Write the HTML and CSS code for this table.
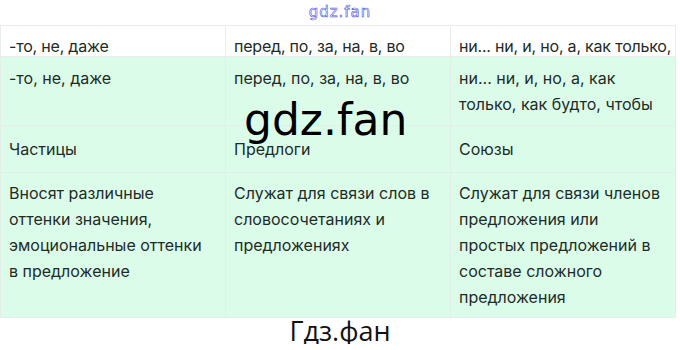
FILE: index.html
```html
<!DOCTYPE html>
<html lang="ru">
<head>
    <meta charset="UTF-8">
    <meta name="viewport" content="width=device-width, initial-scale=1.0">
    <title>Части речи</title>
    <link rel="stylesheet" href="styles.css">
</head>
<body>
    <div class="page">
        <div class="site-mark">gdz.fan</div>

        <div class="table-wrap">
            <table class="pos-table">
                <tr class="row-cut">
                    <td><div class="clip">-то, не, даже</div></td>
                    <td><div class="clip">перед, по, за, на, в, во</div></td>
                    <td><div class="clip">ни... ни, и, но, а, как только,</div></td>
                </tr>
                <tr>
                    <td>-то, не, даже</td>
                    <td>перед, по, за, на, в, во</td>
                    <td>ни... ни, и, но, а, как только, как будто, чтобы</td>
                </tr>
                <tr class="row-name">
                    <td>Частицы</td>
                    <td>Предлоги</td>
                    <td>Союзы</td>
                </tr>
                <tr class="row-desc">
                    <td>Вносят различные оттенки значения, эмоциональные оттенки в предложение</td>
                    <td>Служат для связи слов в словосочетаниях и предложениях</td>
                    <td>Служат для связи членов предложения или простых предложений в составе сложного предложения</td>
                </tr>
            </table>
            <div class="watermark">gdz.fan</div>
        </div>

        <div class="footer-mark">Гдз.фан</div>
    </div>
</body>
</html>
```

FILE: styles.css
```css
body {
    margin: 0;
    padding: 0;
    background-color: #FFFFFF;
    font-family: 'Inter', 'Noto Sans', sans-serif;
    color: #1E2B27;
}

.page {
    width: 680px;
}

.site-mark {
    height: 25px;
    line-height: 24px;
    text-align: center;
    font-family: 'DejaVu Sans', sans-serif;
    font-size: 15px;
    color: #FFFFFF;
    -webkit-text-stroke: 0.6px #4F55E0;
    letter-spacing: 1px;
}

.table-wrap {
    position: relative;
}

.pos-table {
    width: 676px;
    table-layout: fixed;
    border-collapse: collapse;
    font-size: 16px;
    line-height: 26px;
}

.pos-table td {
    vertical-align: top;
    padding: 8px 14px 8px 8px;
    border: 1px solid #E4EEE8;
    background-color: #DCFCEA;
}

.pos-table tr:first-child td {
    border-top-color: #E9E9E9;
}

.row-cut td {
    height: 30px;
    padding: 0 8px;
    background-color: #FFFFFF;
    border-color: #ECECEC;
}

.row-cut .clip {
    height: 30px;
    padding-top: 7px;
    box-sizing: border-box;
    white-space: nowrap;
    letter-spacing: -0.2px;
}

.row-name td {
    padding-top: 10px;
    padding-bottom: 10px;
}

.row-desc td {
    padding-top: 7px;
    padding-bottom: 7px;
}

.watermark {
    position: absolute;
    top: 70px;
    left: 244px;
    font-family: 'DejaVu Sans', sans-serif;
    font-size: 44px;
    line-height: 50px;
    color: #000000;
}

.footer-mark {
    text-align: center;
    font-family: 'Open Sans', sans-serif;
    font-size: 27px;
    line-height: 26px;
    color: #111111;
}
```
